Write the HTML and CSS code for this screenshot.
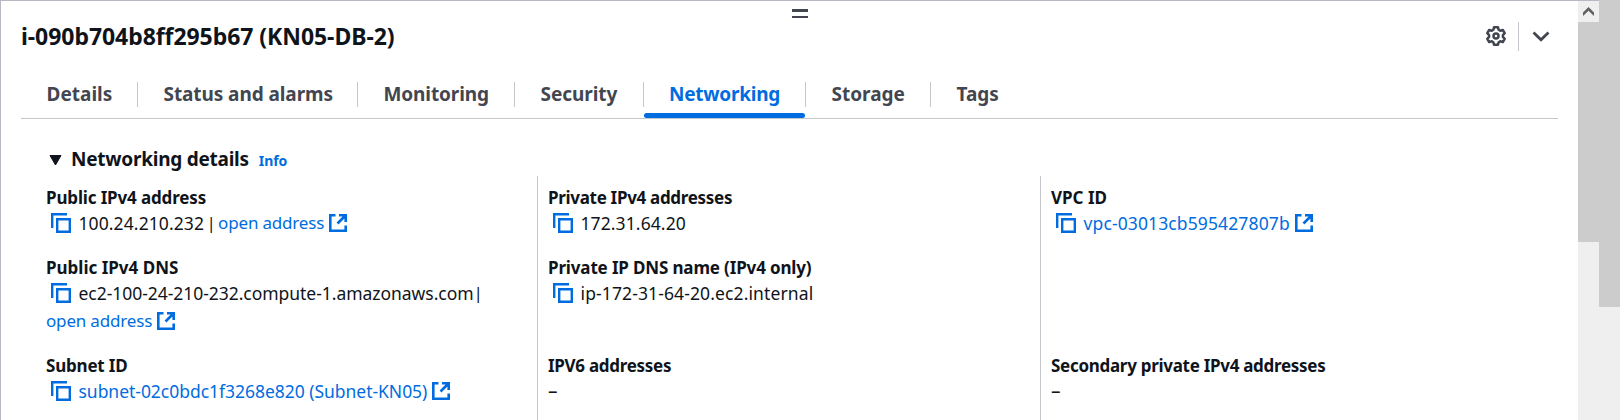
FILE: index.html
```html
<!DOCTYPE html>
<html lang="en">
<head>
<meta charset="utf-8">
<title>Instance details</title>
<link rel="stylesheet" href="styles.css">
</head>
<body>
<svg class="defs" aria-hidden="true">
  <symbol id="copy" viewBox="0 0 20 20"><path d="M1.200 15V1.200H16M6.200 6.200h12.600v12.600H6.200z" fill="none" stroke="currentColor" stroke-width="2.400"/></symbol>
  <symbol id="external" viewBox="0 0 18 18"><path d="M6.500 1.300H1.300v15.400h15.400v-5.200M10 1.300h6.700V8M16.500 1.500 8.500 9.500" fill="none" stroke="currentColor" stroke-width="2.600"/></symbol>
</svg>
<div class="screen">
  <main class="panel">
    <div class="handle"><i></i><i></i></div>
    <header class="header">
      <h1 class="title">i-090b704b8ff295b67 (KN05-DB-2)</h1>
      <div class="actions">
        <svg class="gear" viewBox="0 0 20 20" fill="none" stroke="currentColor" stroke-width="2.500" stroke-linejoin="round"><path d="M8 1.300h4l.7 2.500 1.500.9 2.600-.8 1.900 3.300-1.800 1.900v1.800l1.800 1.900-1.900 3.300-2.600-.8-1.500.9-.7 2.500H8l-.7-2.500-1.500-.9-2.600.8-1.900-3.300 1.800-1.900V9.100L1.300 7.200l1.900-3.300 2.600.8 1.500-.9z"/><circle cx="10" cy="10" r="2.500"/></svg>
        <span class="rule"></span>
        <svg class="chevron" viewBox="0 0 18 11"><path d="m1.500 1.500 7.500 7.200 7.500-7.200" fill="none" stroke="currentColor" stroke-width="2.800"/></svg>
      </div>
    </header>
    <nav class="tabs">
      <a class="tab t-details">Details</a>
      <a class="tab t-status">Status and alarms</a>
      <a class="tab t-monitoring">Monitoring</a>
      <a class="tab t-security">Security</a>
      <a class="tab t-networking active">Networking</a>
      <a class="tab t-storage">Storage</a>
      <a class="tab t-tags">Tags</a>
    </nav>
    <div class="section">
      <svg class="caret" viewBox="0 0 13 11"><path d="M1 .5h11L6.500 10z" fill="currentColor" stroke="currentColor" stroke-linejoin="round"/></svg>
      <h2>Networking details</h2>
      <a class="info">Info</a>
    </div>
    <div class="grid">
      <div class="cell">
        <div class="label s15">Public IPv4 address</div>
        <div class="value"><svg class="copy"><use href="#copy"/></svg><span class="num s-ip">100.24.210.232</span><span class="bar">|</span><a>open address</a><svg class="ext"><use href="#external"/></svg></div>
      </div>
      <div class="cell">
        <div class="label s29">Private IPv4 addresses</div>
        <div class="value"><svg class="copy"><use href="#copy"/></svg><span class="num s-ip">172.31.64.20</span></div>
      </div>
      <div class="cell">
        <div class="label">VPC ID</div>
        <div class="value"><svg class="copy"><use href="#copy"/></svg><a class="num s-vpc">vpc-03013cb595427807b</a><svg class="ext"><use href="#external"/></svg></div>
      </div>
      <div class="cell">
        <div class="label">Public IPv4 DNS</div>
        <div class="value"><svg class="copy"><use href="#copy"/></svg><span class="num s-ec2">ec2-100-24-210-232.compute-1.amazonaws.com</span><span class="bar tight">|</span></div>
        <div class="value"><a>open address</a><svg class="ext"><use href="#external"/></svg></div>
      </div>
      <div class="cell">
        <div class="label s12">Private IP DNS name (IPv4 only)</div>
        <div class="value"><svg class="copy"><use href="#copy"/></svg><span class="num s-dns">ip-172-31-64-20.ec2.internal</span></div>
      </div>
      <div class="cell"></div>
      <div class="cell">
        <div class="label s20">Subnet ID</div>
        <div class="value"><svg class="copy"><use href="#copy"/></svg><a class="num s-subnet">subnet-02c0bdc1f3268e820 (Subnet-KN05)</a><svg class="ext"><use href="#external"/></svg></div>
      </div>
      <div class="cell">
        <div class="label s27">IPV6 addresses</div>
        <div class="value dash">–</div>
      </div>
      <div class="cell">
        <div class="label s27">Secondary private IPv4 addresses</div>
        <div class="value dash">–</div>
      </div>
    </div>
  </main>
  <div class="scroll inner">
    <div class="button"><svg viewBox="0 0 11 9"><path d="M0 5.500 5.500 0 11 5.500V9L5.500 3.800 0 9z" fill="#606060"/></svg></div>
    <div class="thumb"></div>
  </div>
  <div class="scroll outer"><div class="thumb"></div></div>
</div>
</body>
</html>
```
FILE: styles.css
```css
* { box-sizing: border-box; }
body { margin: 0; font-family: "Noto Sans", sans-serif; font-size: 17px; color: #0f141a; background: #fff; }
svg { display: block; flex: none; }
.defs { position: absolute; width: 0; height: 0; }
.screen { display: flex; width: 1620px; height: 420px; overflow: hidden; }
.panel { width: 1578px; height: 420px; overflow: hidden; border-top: 1px solid #b8b8c2; border-left: 1px solid #b8b8c2; }

.handle { display: flex; flex-direction: column; align-items: center; gap: 4px; padding: 8px 0 0 21px; height: 18px; }
.handle i { width: 16px; height: 2.500px; background: #424650; flex: none; }

.header { display: flex; justify-content: space-between; align-items: center; height: 34px; padding: 0 28px 0 20px; }
.title { margin: 0; padding-bottom: 1px; font-size: 23px; line-height: 30px; letter-spacing: -.06px; white-space: nowrap; }
.actions { display: flex; align-items: center; color: #424650; }
.gear { width: 20px; height: 20px; }
.rule { width: 1px; height: 29px; margin: 0 13px 0 12px; background: #c6c6cd; }
.chevron { width: 18px; height: 11px; }

.tabs { display: flex; margin: 13px 0 0 20px; width: 1537px; height: 53px; border-bottom: 1px solid #c6c6cd; font-size: 19px; font-weight: 700; color: #424650; }
.tab { position: relative; flex: none; height: 52px; padding: 15px 0 0 25.500px; line-height: 26px; white-space: nowrap; }
.tab:not(:last-child)::after { content: ""; position: absolute; right: 0; top: 16px; width: 1px; height: 25px; background: #c6c6cd; }
.t-details { width: 117px; }
.t-status { width: 220px; letter-spacing: -.08px; }
.t-monitoring { width: 157px; letter-spacing: -.1px; }
.t-security { width: 129px; letter-spacing: -.05px; }
.t-networking { width: 162px; padding-left: 25px; letter-spacing: -.25px; }
.t-storage { width: 125px; }
.active::before { content: ""; position: absolute; left: 0; right: 1px; bottom: 0; height: 5px; border-radius: 3px; background: #006ce0; }

.section { display: flex; align-items: baseline; height: 57px; padding: 26px 0 0 47.500px; }
.section h2 { margin: 0 10px 0 9.500px; font-size: 19px; line-height: 28px; letter-spacing: -.25px; }
.caret { width: 13px; height: 11px; }
.info { font-size: 14px; font-weight: 700; letter-spacing: -.1px; }

.grid { display: grid; grid-template-columns: 503px 503px 503px; grid-template-rows: 70px 98px 98px; margin-left: 33px; }
.cell { padding: 10px 0 0 10px; border-left: 1px solid #c6c6cd; white-space: nowrap; }
.cell:nth-child(3n+1) { padding-left: 11px; border-left-color: transparent; }
.label { height: 23px; font-weight: 700; line-height: 24px; }
.value { display: flex; align-items: center; height: 28px; line-height: 28px; }
a { color: #006ce0; }
.tab:not(.active) { color: inherit; }
.value a { letter-spacing: -.18px; }
.copy { width: 20px; height: 20px; margin: 0 7.500px 0 5px; color: #006ce0; }
.ext { width: 18px; height: 18px; margin-left: 5px; color: #006ce0; }
.bar { width: 14px; text-align: center; }
.bar.tight { width: 5px; }
.s12 { letter-spacing: -.15px; }
.s15 { letter-spacing: -.15px; }
.s20 { letter-spacing: -.2px; }
.s27 { letter-spacing: -.29px; }
.s29 { letter-spacing: -.31px; }
.num { padding-bottom: 1px; font-size: 17.500px; }
.s-ip { letter-spacing: .1px; }
.value .s-vpc { letter-spacing: .12px; }
.s-ec2 { letter-spacing: -.04px; }
.s-dns { letter-spacing: .12px; }
.value .s-subnet { letter-spacing: -.03px; }
.dash { font-size: 19px; }

.scroll { width: 21px; height: 420px; background: #efefef; }
.thumb { background: #ccc; }
.inner { border-top: 1px solid #b8b8c2; }
.inner .button { display: flex; align-items: center; justify-content: center; height: 21px; }
.button svg { width: 11px; height: 9px; }
.inner .thumb { height: 220px; }
.outer .thumb { height: 307px; }
```
